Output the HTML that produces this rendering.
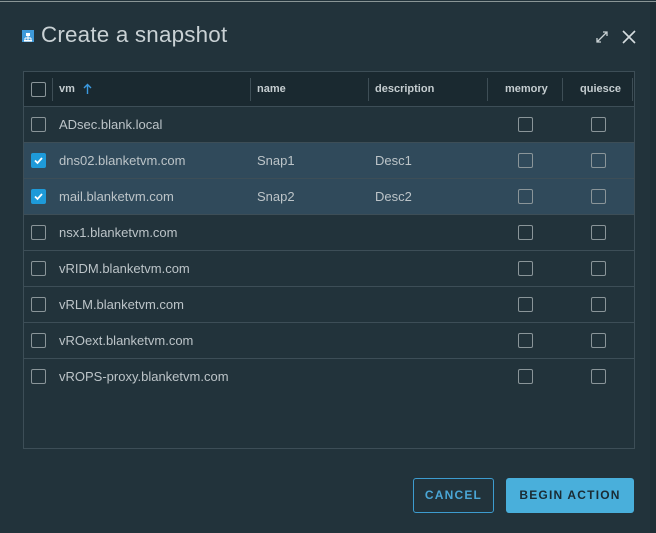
<!DOCTYPE html>
<html><head><style>
body{margin:0;width:656px;height:533px;background:#22333b;font-family:"Liberation Sans",sans-serif;position:relative;overflow:hidden}
.topl{position:absolute;left:0;top:1px;width:656px;height:1px;background:#8a9696}
.rs{position:absolute;left:650px;top:2px;width:6px;height:531px;background:#1f2e35}
.title{position:absolute;left:41px;top:22px;font-size:22.4px;color:#c9d1d4;letter-spacing:0.2px}
.ico{position:absolute;left:22px;top:30px;width:12px;height:12px;background:#3f9ad9}
.tbl{position:absolute;left:23px;top:71px;width:610px;height:376px;border:1px solid #3d4e57;background:#22333b}
.hdr{position:absolute;left:0;top:0;width:610px;height:34px;background:#1a2930;border-bottom:1px solid #3d4e57}
.hd{position:absolute;top:11px;font-size:11px;font-weight:bold;color:#c5cdd0}
.sep{position:absolute;top:6px;width:1px;height:23px;background:#3e4e56}
.row{position:absolute;left:0;width:610px;height:35px;border-bottom:1px solid #3d4e57}
.sel{background:#304a5b}
.cb{position:absolute;width:13px;height:13px;border:1px solid #8a9599;border-radius:2px}
.ck{background:#1e9ad9;border-color:#1e9ad9}
.t{position:absolute;top:10px;font-size:13px;color:#bcc4c8}
.btn{position:absolute;top:478px;height:33px;border-radius:3px;font-size:12px;font-weight:bold;letter-spacing:1.2px;text-align:center;line-height:33px}
</style></head><body>
<div class="topl"></div><div class="rs"></div>
<div class="ico"><svg width="12" height="12" viewBox="0 0 12 12"><rect x="4" y="2" width="4" height="3" fill="#fff"/><path d="M6 5v2M3 7h6M3 7v2M9 7v2M6 7v2" stroke="#fff" fill="none"/><rect x="2" y="9" width="8" height="1.5" fill="#fff"/></svg></div>
<div class="title">Create a snapshot</div>
<svg style="position:absolute;left:595px;top:30px" width="14" height="14" viewBox="0 0 14 14"><path d="M2 12L12 2M8 2h4v4M2 8v4h4" stroke="#c9d1d4" stroke-width="1.3" fill="none"/></svg>
<svg style="position:absolute;left:622px;top:30px" width="14" height="14" viewBox="0 0 14 14"><path d="M1 1L13 13M13 1L1 13" stroke="#d5dcdf" stroke-width="1.6"/></svg>
<div class="tbl">
<div class="hdr">
<div class="cb" style="left:7px;top:10px"></div>
<div class="sep" style="left:28px"></div>
<div class="hd" style="left:35px">vm</div>
<svg style="position:absolute;left:59px;top:11px" width="9" height="11" viewBox="0 0 9 11"><path d="M4.5 11V1.5M1 5l3.5-3.5L8 5" stroke="#3b9ae0" stroke-width="1.4" fill="none"/></svg>
<div class="sep" style="left:226px"></div><div class="hd" style="left:233px">name</div>
<div class="sep" style="left:344px"></div><div class="hd" style="left:351px">description</div>
<div class="sep" style="left:463px"></div><div class="hd" style="left:481px">memory</div>
<div class="sep" style="left:538px"></div><div class="hd" style="left:556px">quiesce</div>
<div class="sep" style="left:608px"></div>
</div>
<div class="row" style="top:35px"><div class="cb" style="left:7px;top:10px"></div><div class="t" style="left:35px">ADsec.blank.local</div><div class="cb" style="left:494px;top:10px"></div><div class="cb" style="left:567px;top:10px"></div></div>
<div class="row sel" style="top:71px"><div class="cb ck" style="left:7px;top:10px"><svg width="13" height="13" viewBox="0 0 13 13"><path d="M3 6.5l2.5 2.5 4.5-5" stroke="#fff" stroke-width="1.8" fill="none"/></svg></div><div class="t" style="left:35px">dns02.blanketvm.com</div><div class="t" style="left:233px">Snap1</div><div class="t" style="left:351px">Desc1</div><div class="cb" style="left:494px;top:10px"></div><div class="cb" style="left:567px;top:10px"></div></div>
<div class="row sel" style="top:107px"><div class="cb ck" style="left:7px;top:10px"><svg width="13" height="13" viewBox="0 0 13 13"><path d="M3 6.5l2.5 2.5 4.5-5" stroke="#fff" stroke-width="1.8" fill="none"/></svg></div><div class="t" style="left:35px">mail.blanketvm.com</div><div class="t" style="left:233px">Snap2</div><div class="t" style="left:351px">Desc2</div><div class="cb" style="left:494px;top:10px"></div><div class="cb" style="left:567px;top:10px"></div></div>
<div class="row" style="top:143px"><div class="cb" style="left:7px;top:10px"></div><div class="t" style="left:35px">nsx1.blanketvm.com</div><div class="cb" style="left:494px;top:10px"></div><div class="cb" style="left:567px;top:10px"></div></div>
<div class="row" style="top:179px"><div class="cb" style="left:7px;top:10px"></div><div class="t" style="left:35px">vRIDM.blanketvm.com</div><div class="cb" style="left:494px;top:10px"></div><div class="cb" style="left:567px;top:10px"></div></div>
<div class="row" style="top:215px"><div class="cb" style="left:7px;top:10px"></div><div class="t" style="left:35px">vRLM.blanketvm.com</div><div class="cb" style="left:494px;top:10px"></div><div class="cb" style="left:567px;top:10px"></div></div>
<div class="row" style="top:251px"><div class="cb" style="left:7px;top:10px"></div><div class="t" style="left:35px">vROext.blanketvm.com</div><div class="cb" style="left:494px;top:10px"></div><div class="cb" style="left:567px;top:10px"></div></div>
<div class="row" style="top:287px;border-bottom:none"><div class="cb" style="left:7px;top:10px"></div><div class="t" style="left:35px">vROPS-proxy.blanketvm.com</div><div class="cb" style="left:494px;top:10px"></div><div class="cb" style="left:567px;top:10px"></div></div>
</div>
<div class="btn" style="left:413px;width:79px;border:1px solid #3d9ccf;color:#4aa6d6">CANCEL</div>
<div class="btn" style="left:506px;width:128px;height:35px;line-height:35px;background:#49afdb;color:#1a2b33">BEGIN ACTION</div>
</body></html>
